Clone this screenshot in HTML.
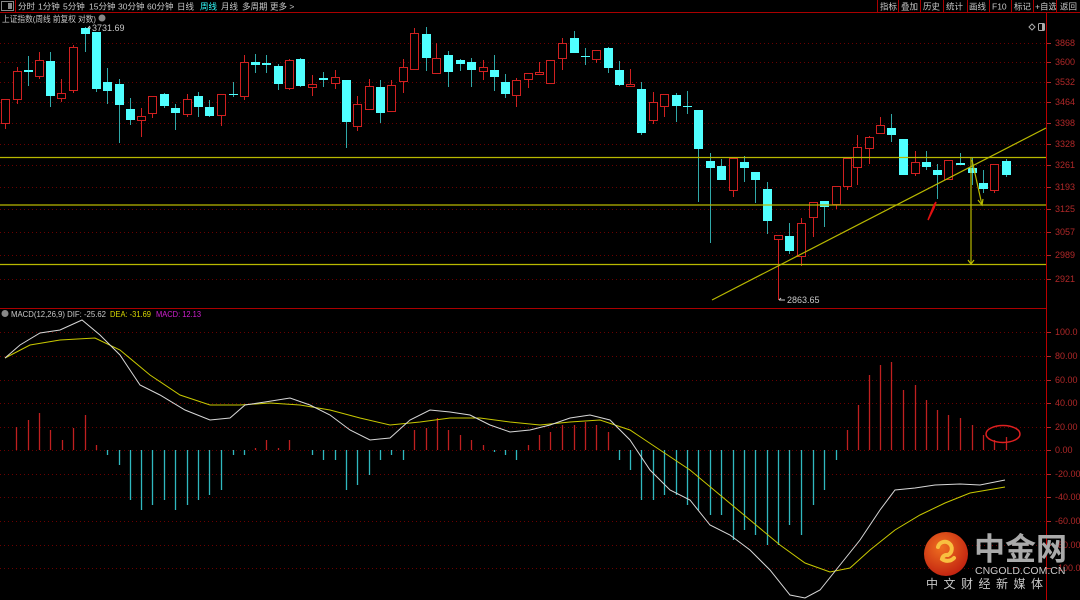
<!DOCTYPE html>
<html><head><meta charset="utf-8">
<style>
html,body{margin:0;padding:0;background:#000;width:1080px;height:600px;overflow:hidden;font-family:"Liberation Sans","Noto Sans CJK SC",sans-serif}
svg{position:absolute;left:0;top:0}
</style></head><body>
<svg id="s" width="1080" height="600" xmlns="http://www.w3.org/2000/svg" font-family="Liberation Sans, Noto Sans CJK SC, sans-serif">
<rect width="1080" height="600" fill="#000"/>
<g id="grid"></g>
<g id="cand"></g>
<g id="bars"></g>
<!-- top bar -->
<line x1="0" y1="12.5" x2="1080" y2="12.5" stroke="#a00" stroke-width="1"/>
<rect x="1.5" y="1.5" width="12" height="9" fill="none" stroke="#888"/>
<rect x="8" y="3" width="4" height="6" fill="#888"/>
<line x1="15.5" y1="0" x2="15.5" y2="12" stroke="#a00"/>
<g font-size="8.5" fill="#c8c8c8">
<text x="18" y="9.5">分时</text><text x="38" y="9.5">1分钟</text><text x="63" y="9.5">5分钟</text><text x="89" y="9.5">15分钟</text><text x="118" y="9.5">30分钟</text><text x="147" y="9.5">60分钟</text><text x="177" y="9.5">日线</text><text x="200" y="9.5" fill="#3ff">周线</text><text x="221" y="9.5">月线</text><text x="242" y="9.5">多周期</text><text x="270" y="9.5">更多 &gt;</text>
<text x="880" y="9.5">指标</text><text x="901" y="9.5">叠加</text><text x="923" y="9.5">历史</text><text x="946" y="9.5">统计</text><text x="969" y="9.5">画线</text><text x="992" y="9.5">F10</text><text x="1014" y="9.5">标记</text><text x="1035" y="9.5">+自选</text><text x="1060" y="9.5">返回</text>
<text x="2" y="22" textLength="94" lengthAdjust="spacingAndGlyphs">上证指数(周线 前复权 对数)</text>
</g>
<circle cx="102" cy="18" r="3.5" fill="#888"/>
<g stroke="#a00"><line x1="877.5" y1="0" x2="877.5" y2="12"/><line x1="898.5" y1="0" x2="898.5" y2="12"/><line x1="920.5" y1="0" x2="920.5" y2="12"/><line x1="943.5" y1="0" x2="943.5" y2="12"/><line x1="967.5" y1="0" x2="967.5" y2="12"/><line x1="989.5" y1="0" x2="989.5" y2="12"/><line x1="1011.5" y1="0" x2="1011.5" y2="12"/><line x1="1033.5" y1="0" x2="1033.5" y2="12"/><line x1="1056.5" y1="0" x2="1056.5" y2="12"/></g>
<path d="M1029 27 l3 -3 l3 3 l-3 3z" fill="none" stroke="#aaa"/>
<rect x="1038.5" y="23.5" width="6" height="7" rx="1" fill="none" stroke="#aaa"/><rect x="1042" y="24" width="2" height="6" fill="#aaa"/>
<line x1="1046.5" y1="13" x2="1046.5" y2="600" stroke="#b00"/>
<line x1="0" y1="308.5" x2="1046" y2="308.5" stroke="#a00"/>
<g font-size="9" fill="#b02828" id="ax"></g>
<!-- yellow lines -->
<g stroke="#b8b800" stroke-width="1.2" fill="none">
<line x1="0" y1="157.5" x2="1046" y2="157.5"/>
<line x1="0" y1="205" x2="1046" y2="205"/>
<line x1="0" y1="264.5" x2="1046" y2="264.5"/>
<line x1="712" y1="300" x2="1046" y2="128"/>
<line x1="971" y1="158" x2="971" y2="264"/>
<path d="M968 260 l3 4 l3 -4"/>
<line x1="972" y1="160" x2="982" y2="205"/>
<path d="M978 200 l4 5 l1 -6"/>
</g>
<path d="M928 220 L934 205 L936 202 L934 208 Z" fill="#e01010" stroke="#e01010" stroke-width="1.5"/>
<g font-size="9" fill="#c8c8c8"><text x="92" y="31">3731.69</text><text x="787" y="303">2863.65</text></g>
<g stroke="#c8c8c8" fill="none"><path d="M88 28 h3 M88 28 l2 -2"/><path d="M779 300 h6 M779 300 l2 -2"/></g>
<!-- MACD legend -->
<circle cx="5" cy="313.5" r="3.5" fill="#888"/>
<g font-size="8.5"><text x="11" y="317" fill="#c8c8c8" textLength="95" lengthAdjust="spacingAndGlyphs">MACD(12,26,9) DIF: -25.62</text><text x="110" y="317" fill="#d8d800" textLength="41" lengthAdjust="spacingAndGlyphs">DEA: -31.69</text><text x="156" y="317" fill="#d020d0" textLength="45" lengthAdjust="spacingAndGlyphs">MACD: 12.13</text></g>
<polyline id="dea" fill="none" stroke="#c8c800" stroke-width="1"/>
<polyline id="dif" fill="none" stroke="#d8d8d8" stroke-width="1"/>
<ellipse cx="1003" cy="434" rx="17" ry="8.5" fill="none" stroke="#e02020" stroke-width="1.5"/>
<!-- logo -->
<defs><radialGradient id="lg" cx="0.4" cy="0.35" r="0.7"><stop offset="0" stop-color="#f07020"/><stop offset="1" stop-color="#c02010"/></radialGradient></defs>
<circle cx="946" cy="554" r="22" fill="url(#lg)"/>
<path d="M938 547 a7 7 0 1 1 10 8 a5 5 0 0 0 -6 4 a9 9 0 0 0 12 -1" fill="none" stroke="#f8c040" stroke-width="4" stroke-linecap="round"/>
<text x="974" y="560" font-size="31" font-weight="bold" fill="#aaaaaa">中金网</text>
<text x="975" y="574" font-size="10.5" fill="#c8c8c8">CNGOLD.COM.CN</text>
<text x="926" y="588" font-size="12" fill="#c8c8c8" letter-spacing="5.5">中文财经新媒体</text>
</svg>
<script>
var NS="http://www.w3.org/2000/svg";
function el(p,t,a,txt){var e=document.createElementNS(NS,t);for(var k in a)e.setAttribute(k,a[k]);if(txt)e.textContent=txt;document.getElementById(p).appendChild(e);return e;}
var py=[[43,"3868"],[62,"3600"],[82,"3532"],[102,"3464"],[123,"3398"],[144,"3328"],[165,"3261"],[187,"3193"],[209,"3125"],[232,"3057"],[255,"2989"],[279,"2921"]];
var my=[[332,"100.0"],[356,"80.00"],[380,"60.00"],[403,"40.00"],[427,"20.00"],[450,"0.00"],[474,"-20.00"],[497,"-40.00"],[521,"-60.00"],[545,"-80.00"],[568,"-100.0"]];
py.concat(my).forEach(function(a){el("grid","line",{x1:0,y1:a[0]+.5,x2:1046,y2:a[0]+.5,stroke:"#6a0000","stroke-dasharray":"1,3"});el("grid","line",{x1:1047,y1:a[0]+.5,x2:1051,y2:a[0]+.5,stroke:"#b02828"});el("ax","text",{x:1055,y:a[0]+3},a[1]);});
var C=[[4.5,99,123,99,129,1],[16.5,71,99,67,104,1],[28,70,72,56,86,0],[38.5,60,76,52,79,1],[50,61,96,52,107,0],[61,93,98,79,102,1],[73,47,90,45,93,1],[85,28,34,27,52,0],[96,32,89,32,92,0],[107,82,91,68,104,0],[119,84,105,79,143,0],[130,109,120,98,125,0],[141,116,120,108,137,1],[152,96,113,96,118,1],[164,94,106,93,108,0],[175,108,113,104,130,0],[187,99,114,94,117,1],[198,96,107,92,117,0],[209,107,116,100,117,0],[221,94,115,94,126,1],[233,94,95,82,97,0],[244,62,96,55,100,1],[255,62,65,54,73,0],[266,63,65,55,73,0],[278,66,84,64,90,0],[289,60,88,59,90,1],[300,59,86,58,87,0],[312,84,87,75,96,1],[323,78,80,72,87,0],[335,77,83,70,89,1],
[346,80,122,80,148,0],[357,104,126,96,131,1],[369,86,109,79,109,1],[380,87,113,80,123,0],[391,85,111,80,111,1],[403,67,81,59,93,1],[414,33,69,28,69,1],[426,34,58,27,71,0],[436,58,73,43,73,1],[448,55,72,51,87,0],[460,60,64,59,71,0],[471,62,70,58,87,0],[483,67,71,60,80,1],[494,70,77,55,91,0],[505,82,94,74,98,0],[516,80,95,78,107,1],[528,73,79,73,88,1],[539,72,74,62,75,1],[550,60,83,60,83,1],[562,43,58,38,70,1],[574,38,53,31,53,0],[585,56,57,48,65,0],[596,50,59,50,63,1],[608,48,68,47,73,0],[619,70,85,61,86,0],[630,84,86,69,87,1],[641,89,133,82,135,0],[653,102,120,92,124,1],[664,94,106,94,117,1],[676,95,106,93,122,0],[687,106,107,91,114,0],[698,110,149,110,202,0],
[710,161,168,153,243,0],[721,166,180,159,180,0],[733,158,190,158,197,1],[744,162,168,156,182,0],[755,172,180,172,203,0],[767,189,221,182,234,0],[778,235,239,235,300,1],[789,236,251,223,254,0],[801,223,256,218,266,1],[813,202,217,202,237,1],[824,201,207,201,227,0],[836,186,204,186,209,1],[847,158,186,158,190,1],[857,147,167,135,185,1],[869,137,148,136,164,1],[880,125,133,117,134,1],[891,128,135,114,142,0],[903,139,175,139,175,0],[915,162,173,151,176,1],[926,162,167,151,170,0],[937,170,175,164,199,0],[948,160,179,160,179,1],[960,163,165,153,165,0],[972,168,173,158,185,0],[983,183,189,170,193,0],[994,164,190,164,193,1],[1006,161,175,159,177,0]];
C.forEach(function(c){var col=c[5]?"#d02020":"#40e8e8";var x=Math.round(c[0]);
el("cand","line",{x1:x+.5,y1:c[3],x2:x+.5,y2:c[4],stroke:c[5]?col:"#30a8a8"});
var h=Math.max(1,c[2]-c[1]);
if(c[5])el("cand","rect",{x:x-3.5,y:c[1]+.5,width:8,height:h,fill:"#000",stroke:col});
else el("cand","rect",{x:x-4,y:c[1],width:9,height:h,fill:"#50ffff"});});
var B=[[16,427],[28,420],[39,413],[50,430],[62,440],[73,428],[85,415],[96,445],[107,455],[119,465],[130,500],[141,510],[152,505],[164,500],[175,510],[187,505],[198,500],[209,495],[221,490],[233,455],[244,455],[255,448],[266,440],[278,448],[289,440],[312,455],[323,460],[335,460],[346,490],[357,485],[369,475],[380,460],[391,455],[403,460],[414,430],[426,428],[437,418],[448,430],[460,435],[471,440],[483,445],[494,452],[505,455],[516,460],[528,445],[539,435],[550,432],[562,425],[574,425],[585,422],[596,425],[608,432],[619,460],[630,470],[641,500],[653,500],[664,495],[676,495],[687,505],[698,510],[710,515],[721,515],[733,540],[744,530],[755,535],[767,545],[778,545],[789,525],[801,535],[813,505],[824,490],[836,460],[847,430],[858,405],[869,375],[880,365],[891,362],[903,390],[915,385],[926,400],[937,410],[948,415],[960,418],[972,425],[983,435],[994,440],[1006,437]];
B.forEach(function(b){el("bars","line",{x1:b[0]+.5,y1:450,x2:b[0]+.5,y2:b[1],stroke:b[1]<450?"#c02020":"#30b8c0","stroke-width":1.3});});
document.getElementById("dif").setAttribute("points","5,358 20,345 40,333 60,330 82,320 100,335 120,355 140,385 160,395 185,410 210,420 230,418 245,405 265,402 290,398 310,405 330,415 350,430 370,440 390,438 410,420 430,410 450,412 470,415 490,425 510,432 530,430 550,425 570,418 590,415 610,420 630,440 650,470 670,490 690,500 710,525 730,535 750,550 770,570 790,595 805,598 820,590 840,565 860,540 880,510 895,490 915,488 935,485 960,484 980,485 1005,480");
document.getElementById("dea").setAttribute("points","5,358 30,345 60,340 95,338 120,350 150,375 180,395 210,405 240,405 270,403 300,405 330,410 360,418 390,425 420,422 450,418 480,418 510,422 540,425 570,422 600,420 630,430 660,450 690,470 720,495 750,520 780,545 805,563 830,572 850,568 870,550 895,530 920,515 945,503 970,493 1005,487");
</script>
</body></html>
